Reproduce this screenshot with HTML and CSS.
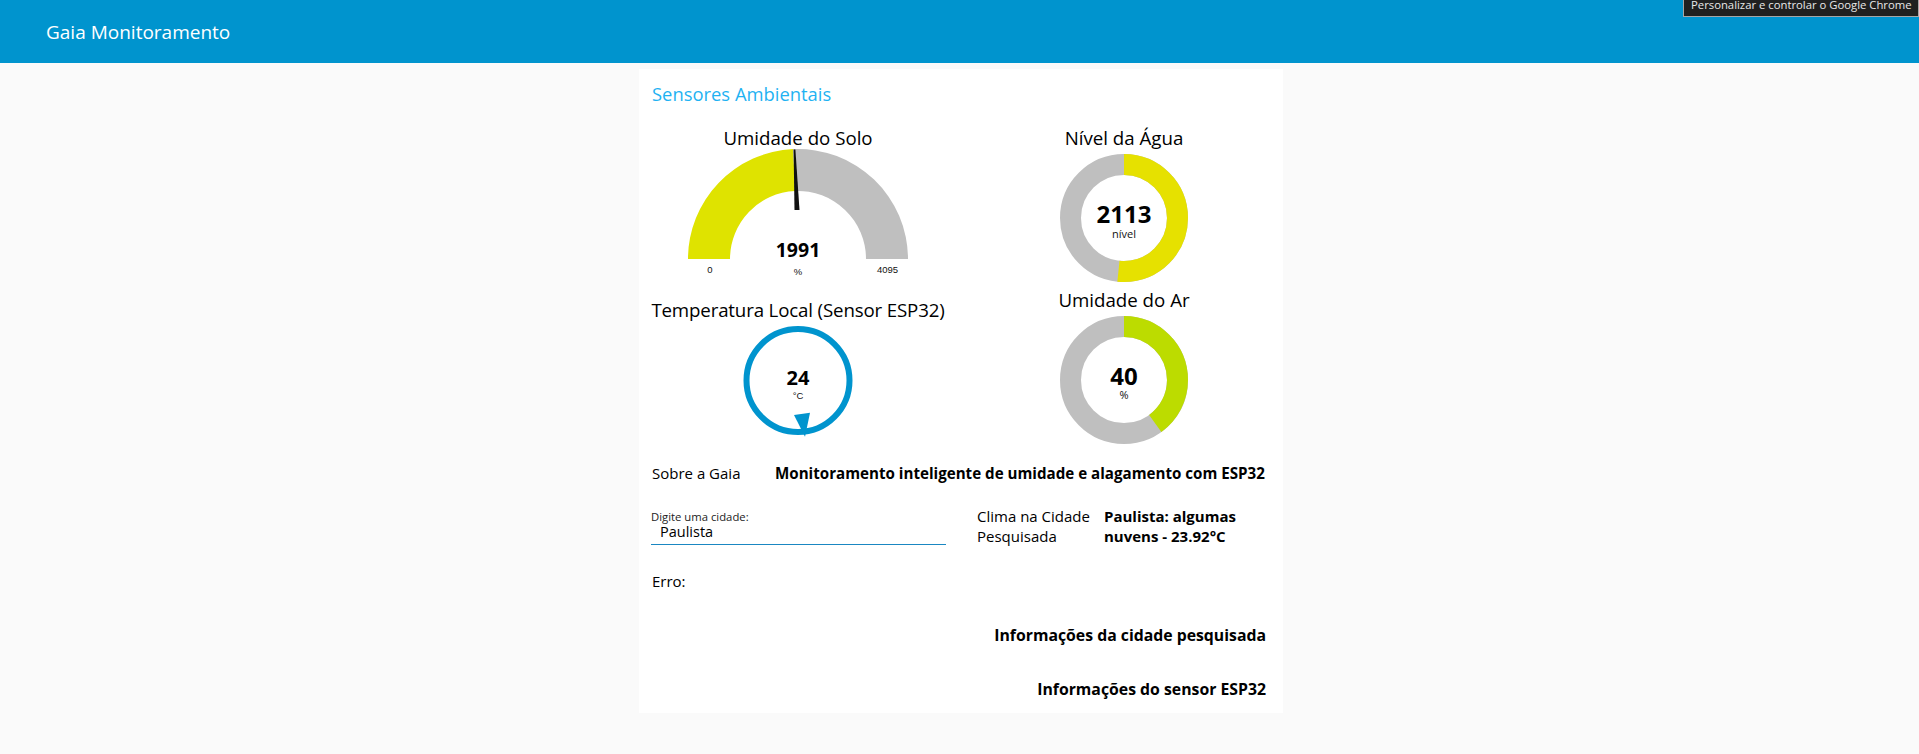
FILE: index.html
```html
<!DOCTYPE html>
<html lang="pt-BR">
<head>
<meta charset="utf-8">
<title>Gaia Monitoramento</title>
<link rel="stylesheet" href="styles.css">
</head>
<body>
<header class="toolbar"><span class="toolbar-title">Gaia Monitoramento</span></header>
<div class="chrome-tip">Personalizar e controlar o Google Chrome</div>
<main class="page">
  <section class="card">
    <h2 class="card-title">Sensores Ambientais</h2>
    <div class="widgets">
      <div class="col">
        <div class="widget">
          <div class="w-title">Umidade do Solo</div>
          <svg class="gauge" width="220" height="150" viewBox="0 0 220 150">
            <path fill="#dfe300" d="M0 110 A110 110 0 0 1 105.24 0.1 L107.06 42.06 A68 68 0 0 0 42 110 Z"/>
            <path fill="#bfbfbf" d="M105.24 0.1 A110 110 0 0 1 220 110 L178 110 A68 68 0 0 0 107.06 42.06 Z"/>
            <polygon fill="#111" points="105.6,0.5 107.4,0.5 111.5,61 106.5,61"/>
            <text x="110" y="108" class="g-value">1991</text>
            <text x="110" y="126" class="g-small">%</text>
            <text x="22" y="124" class="g-small">0</text>
            <text x="199.5" y="124" class="g-small">4095</text>
          </svg>
        </div>
        <div class="widget">
          <div class="w-title w-title-long">Temperatura Local (Sensor ESP32)</div>
          <svg class="compass" width="120" height="120" viewBox="0 0 120 120">
            <circle cx="60" cy="59.5" r="51.5" fill="none" stroke="#0094ce" stroke-width="6"/>
            <polygon fill="#0094ce" points="56,94 72,91.7 67,115.7"/>
            <text x="60" y="64" class="c-value">24</text>
            <text x="60" y="78" class="g-small">°C</text>
          </svg>
        </div>
      </div>
      <div class="col">
        <div class="widget">
          <div class="w-title">Nível da Água</div>
          <svg class="donut" width="140" height="140" viewBox="0 0 140 140">
            <circle cx="70" cy="69" r="53.5" fill="none" stroke="#bfbfbf" stroke-width="21"/>
            <circle cx="70" cy="69" r="53.5" fill="none" stroke="#e6e100" stroke-width="21" stroke-dasharray="173.45 400" transform="rotate(-90 70 69)"/>
            <text x="70" y="74" class="d-value">2113</text>
            <text x="70" y="88.7" class="d-unit">nível</text>
          </svg>
        </div>
        <div class="widget">
          <div class="w-title">Umidade do Ar</div>
          <svg class="donut" width="140" height="140" viewBox="0 0 140 140">
            <circle cx="70" cy="69" r="53.5" fill="none" stroke="#bfbfbf" stroke-width="21"/>
            <circle cx="70" cy="69" r="53.5" fill="none" stroke="#bcdc00" stroke-width="21" stroke-dasharray="134.46 400" transform="rotate(-90 70 69)"/>
            <text x="70" y="74" class="d-value">40</text>
            <text x="70" y="88" class="d-unit">%</text>
          </svg>
        </div>
      </div>
    </div>

    <div class="about">
      <span class="about-label">Sobre a Gaia</span>
      <span class="about-value">Monitoramento inteligente de umidade e alagamento com ESP32</span>
    </div>

    <div class="search">
      <label class="field">
        <span class="field-label">Digite uma cidade:</span>
        <input class="field-input" type="text" value="Paulista">
      </label>
      <div class="clima">
        <span class="clima-label">Clima na Cidade Pesquisada</span>
        <span class="clima-value">Paulista: algumas nuvens - 23.92°C</span>
      </div>
    </div>

    <div class="error">Erro:</div>
    <div class="info">Informações da cidade pesquisada</div>
    <div class="info">Informações do sensor ESP32</div>
  </section>
</main>
</body>
</html>
```

FILE: styles.css
```css
html, body {
  margin: 0;
  padding: 0;
}
body {
  background: #fafafa;
  font-family: "Open Sans", "Noto Sans", sans-serif;
  color: #000;
  position: relative;
}
.toolbar {
  height: 63px;
  box-sizing: border-box;
  background: #0094ce;
  display: flex;
  align-items: center;
  padding: 1px 0 0 46px;
}
.toolbar-title {
  color: #fff;
  font-size: 19px;
  line-height: 26px;
}
.chrome-tip {
  position: absolute;
  top: 0;
  right: 0;
  width: 236px;
  height: 17px;
  box-sizing: border-box;
  background: #202020;
  border: 1px solid #a6a6a6;
  border-top: none;
  color: #e8e8e8;
  font-size: 11.3px;
  line-height: 10px;
  padding-left: 7px;
  white-space: nowrap;
  overflow: hidden;
}
.page {
  display: flex;
  justify-content: center;
  padding: 6px 0 0 3px;
}
.card {
  width: 644px;
  box-sizing: border-box;
  background: #fff;
  padding: 13px 17px 14px 13px;
}
.card-title {
  margin: 0;
  font-size: 18.4px;
  font-weight: 400;
  line-height: 24px;
  color: #1fb2f2;
}
.widgets {
  display: grid;
  grid-template-columns: 292px 284px;
  column-gap: 38px;
  margin-top: 21px;
  align-items: start;
}
.col {
  display: flex;
  flex-direction: column;
  align-items: center;
}
.widget {
  display: flex;
  flex-direction: column;
  align-items: center;
}
.w-title {
  font-size: 18.7px;
  line-height: 22px;
  white-space: nowrap;
  color: #000;
}
.w-title-long {
  letter-spacing: -0.15px;
}
svg {
  display: block;
  overflow: visible;
}
.g-value, .c-value, .d-value {
  font-family: "Open Sans", sans-serif;
  font-weight: 700;
  text-anchor: middle;
  fill: #000;
}
.g-value { font-size: 19.5px; }
.c-value { font-size: 20px; }
.d-value { font-size: 24px; }
.g-small {
  font-family: "Liberation Sans", Arial, sans-serif;
  font-size: 9.5px;
  text-anchor: middle;
  fill: #111;
}
.d-unit {
  font-family: "Open Sans", sans-serif;
  font-size: 11px;
  text-anchor: middle;
  fill: #111;
}
.about {
  display: flex;
  margin-top: 12px;
  font-size: 15px;
  line-height: 20px;
}
.about-label {
  width: 123px;
  flex: none;
}
.about-value {
  font-weight: 700;
  font-size: 15.15px;
  white-space: nowrap;
}
.search {
  display: flex;
  align-items: flex-start;
  margin-top: 23px;
}
.field {
  display: flex;
  flex-direction: column;
  width: 295px;
  margin: 5px 0 0 -1px;
  flex: none;
}
.field-label {
  font-size: 11.3px;
  line-height: 12px;
  color: #222;
}
.field-input {
  width: 100%;
  height: 22px;
  box-sizing: border-box;
  margin: 0;
  border: none;
  border-bottom: 1px solid #1a87c2;
  padding: 0 0 5px 9px;
  background: transparent;
  font-family: "Open Sans", sans-serif;
  font-size: 14.5px;
  line-height: 16px;
  color: #000;
  outline: none;
}
.clima {
  display: flex;
  margin-left: 31px;
  font-size: 15px;
  line-height: 20px;
}
.clima-label {
  width: 127px;
  flex: none;
}
.clima-value {
  width: 150px;
  font-weight: 700;
}
.error {
  margin-top: 25px;
  font-size: 15px;
  line-height: 20px;
}
.info {
  margin-top: 34px;
  text-align: right;
  font-size: 15.8px;
  font-weight: 700;
  line-height: 20px;
}
```
